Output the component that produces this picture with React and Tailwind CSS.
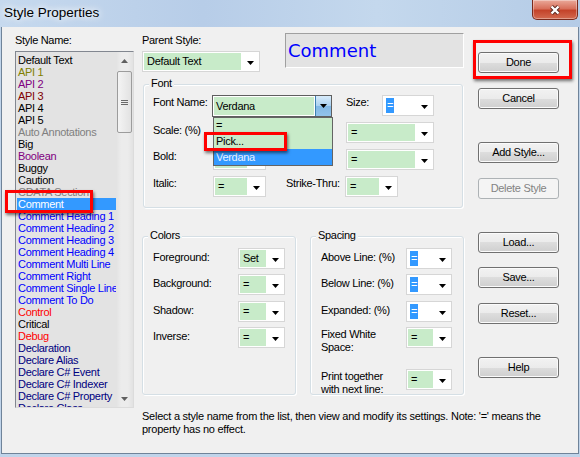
import React from 'react';

const styles = [
  ['Default Text', 'text-black'],
  ['API 1', 'text-[#808000]'],
  ['API 2', 'text-[#800080]'],
  ['API 3', 'text-[#800000]'],
  ['API 4', 'text-black'],
  ['API 5', 'text-black'],
  ['Auto Annotations', 'text-[#808080]'],
  ['Big', 'text-black'],
  ['Boolean', 'text-[#800080]'],
  ['Buggy', 'text-black'],
  ['Caution', 'text-black'],
  ['CDATA Section', 'text-[#808080]'],
  ['Comment', 'text-white bg-[#3399ff]'],
  ['Comment Heading 1', 'text-[#0000ff]'],
  ['Comment Heading 2', 'text-[#0000ff]'],
  ['Comment Heading 3', 'text-[#0000ff]'],
  ['Comment Heading 4', 'text-[#0000ff]'],
  ['Comment Multi Line', 'text-[#0000ff]'],
  ['Comment Right', 'text-[#0000ff]'],
  ['Comment Single Line', 'text-[#0000ff]'],
  ['Comment To Do', 'text-[#0000ff]'],
  ['Control', 'text-[#ff0000]'],
  ['Critical', 'text-black'],
  ['Debug', 'text-[#ff0000]'],
  ['Declaration', 'text-[#000080]'],
  ['Declare Alias', 'text-[#000080]'],
  ['Declare C# Event', 'text-[#000080]'],
  ['Declare C# Indexer', 'text-[#000080]'],
  ['Declare C# Property', 'text-[#000080]'],
  ['Declare Class', 'text-[#000080]'],
];

const Arrow = ({ up, color = '#000' }) => (
  <svg width="7" height="4" viewBox="0 0 7 4" className="block">
    <path d={up ? 'M0 4H7L3.5 0Z' : 'M0 0H7L3.5 4Z'} fill={color} />
  </svg>
);

// combo box: green fill, or white with a selected "="
function Combo({ w, value = '=', sel }) {
  return (
    <div className={`${w} h-[21px] flex shrink-0 border border-[#d6d6d6] bg-white`}>
      <div className="flex-1 p-[1px] flex">
        {sel ? (
          <div className="flex-1 pl-[2px] flex items-center">
            <span className="bg-[#3399ff] text-white text-[11px] leading-[15px] px-[1px]">=</span>
          </div>
        ) : (
          <div className="flex-1 bg-[#c8ebc9] pl-[3px] flex items-center text-[11px] text-black">{value}</div>
        )}
      </div>
      <div className="w-[17px] flex items-center justify-center pt-[2px]">
        <Arrow />
      </div>
    </div>
  );
}

function Btn({ children, disabled }) {
  return (
    <div
      className={`h-[21px] w-[81px] rounded-[3px] border flex items-center justify-center text-[11px] ${
        disabled
          ? 'border-[#adb2b5] bg-[#f4f4f4] text-[#838383]'
          : 'border-[#707070] text-black bg-[linear-gradient(#f2f2f2_0%,#ebebeb_50%,#dddddd_50%,#cfcfcf_100%)] shadow-[inset_0_0_0_1px_#fbfbfb]'
      }`}
    >
      {children}
    </div>
  );
}

function Group({ title, className, children }) {
  return (
    <div className={`relative rounded-[3px] border border-[#d5dfe5] shadow-[inset_1px_1px_0_#fff,1px_1px_0_#fff] ${className}`}>
      <span className="absolute -top-[8px] left-[5px] bg-[#f0f0f0] px-[2px] text-[11px] leading-[13px]">{title}</span>
      {children}
    </div>
  );
}

const RedBox = ({ className }) => (
  <div className={`absolute border-[3px] border-[#ff0000] shadow-[1px_2px_3px_rgba(0,0,0,0.55)] z-20 ${className}`} />
);

function Row({ label, children, two, mt = '' }) {
  return (
    <div className={`flex items-start ${mt}`}>
      <div className={`w-[85px] text-[11px] leading-[13px] ${two ? 'pt-[1px]' : 'pt-[3px]'}`}>{label}</div>
      {children}
    </div>
  );
}

export default function App() {
  return (
    <div className="w-[580px] h-[457px] flex flex-col overflow-hidden bg-[#c0d4ea] font-['Liberation_Sans',Arial,sans-serif] text-black tracking-[-0.3px]">
      {/* title bar */}
      <div className="h-[27px] shrink-0 flex justify-between bg-[linear-gradient(90deg,#c6d9ee,#b7cde8_35%,#c4d8ed_65%,#b4cbe6)]">
        <div className="pl-[4px] pt-[5px] text-[13.5px] leading-[16px] tracking-normal [text-shadow:0_0_6px_#fff,0_0_10px_#fff]">Style Properties</div>
        <div className="mr-[2px] w-[46px] h-[20px] rounded-b-[5px] border border-t-0 border-[#7a2a1c] bg-[linear-gradient(#eaa99a,#d8705b_45%,#c4432a_55%,#d36a50)] shadow-[inset_0_0_0_1px_rgba(255,255,255,0.35)] flex items-center justify-center">
          <svg width="14" height="12" viewBox="0 0 14 12">
            <path d="M3.5 2.5L10.5 9.5M10.5 2.5L3.5 9.5" stroke="#5a2a22" strokeWidth="4.2" />
            <path d="M3.5 2.5L10.5 9.5M10.5 2.5L3.5 9.5" stroke="#fff" strokeWidth="2.4" />
          </svg>
        </div>
      </div>

      {/* client */}
      <div className="flex-1 mx-[1px] mb-[3px] border border-t-0 border-[#6f8399] bg-[#f0f0f0]">
        <div className="flex pl-[13px] pt-[7px]">
          {/* style list */}
          <div className="w-[119px] shrink-0">
            <div className="h-[13px] text-[11px] leading-[13px]">Style Name:</div>
            <div className="relative mt-[4px] h-[357px]">
              <div className="h-full flex border border-[#828790] border-r-[#dcdcdc] border-b-[#dcdcdc] bg-[#e3e3e3] overflow-hidden">
                <div className="flex-1 pt-[2px] pl-[1px] overflow-hidden">
                  {styles.map(([name, cls]) => (
                    <div key={name} className={`h-[12px] leading-[12px] text-[11px] pl-[1px] whitespace-nowrap ${cls}`}>{name}</div>
                  ))}
                </div>
                <div className="w-[17px] flex flex-col bg-[linear-gradient(90deg,#e2e2e2,#ececec_30%,#ececec_70%,#e2e2e2)]">
                  <div className="h-[17px] flex items-center justify-center"><Arrow up color="#606060" /></div>
                  <div className="mx-[1px] mt-[2px] h-[62px] rounded-[2px] border border-[#9c9c9c] bg-[linear-gradient(90deg,#f4f4f4,#e2e2e2)] flex flex-col items-center justify-center gap-[1px]">
                    <div className="w-[7px] h-[1px] bg-[#6a6a6a]" />
                    <div className="w-[7px] h-[1px] bg-[#6a6a6a]" />
                    <div className="w-[7px] h-[1px] bg-[#6a6a6a]" />
                  </div>
                  <div className="flex-1" />
                  <div className="h-[17px] flex items-center justify-center"><Arrow color="#606060" /></div>
                </div>
              </div>
              <RedBox className="left-[-10px] top-[139px] w-[88px] h-[23px]" />
            </div>
          </div>

          {/* right side */}
          <div className="ml-[8px] flex flex-col">
            <div className="flex">
              <div className="w-[322px] shrink-0">
                <div className="flex">
                  <div className="w-[118px]">
                    <div className="h-[13px] text-[11px] leading-[13px]">Parent Style:</div>
                    <div className="mt-[4px]"><Combo w="w-[118px]" value="Default Text" /></div>
                  </div>
                  <div className="ml-[25px] -mt-[1px] w-[179px] h-[35px] border border-[#a0a0a0] border-r-white border-b-white bg-[#e3e3e3] pl-[2px] flex items-center">
                    <span className="font-['DejaVu_Sans',Verdana,sans-serif] text-[18px] tracking-normal text-[#0000ff]">Comment</span>
                  </div>
                </div>

                {/* Font */}
                <Group title="Font" className="mt-[12px] ml-[1px] w-[320px] h-[124px]">
                  <div className="pl-[9px] pt-[10px] flex flex-col gap-[5px]">
                    <div className="flex items-start h-[22px]">
                      <div className="w-[59px] pt-[1px] text-[11px] leading-[13px]">Font Name:</div>
                      <div className="relative w-[120px] h-[22px] flex border border-[#5f5f5f] bg-white">
                        <div className="flex-1 p-[1px]">
                          <div className="h-full bg-[#c8ebc9] flex items-center pl-[2px] text-[11px]">Verdana</div>
                        </div>
                        <div className="w-[16px] border-l border-[#3c7fb1] bg-[linear-gradient(#d8ecfb,#a9d0f0_50%,#82b8e5_50%,#92c3eb)] flex items-center justify-center">
                          <Arrow />
                        </div>
                        <div className="absolute left-0 top-[21px] w-[120px] h-[49px] border border-[#646464] bg-[#c8ebc9] text-[11px] z-10">
                          <div className="h-[15px] leading-[15px] pl-[2px]">=</div>
                          <div className="h-[16px] leading-[16px] pl-[2px]">Pick...</div>
                          <div className="h-[16px] leading-[16px] pl-[2px] bg-[#3399ff] text-[#eaf3ff]">Verdana</div>
                        </div>
                        <RedBox className="left-[-9px] top-[36px] w-[83px] h-[19px]" />
                      </div>
                      <div className="w-[14px]" />
                      <div className="w-[36px] pt-[1px] text-[11px] leading-[13px]">Size:</div>
                      <Combo w="w-[52px]" sel />
                    </div>
                    <div className="flex items-start h-[22px]">
                      <div className="w-[60px] pt-[2px] text-[11px] leading-[13px]">Scale: (%)</div>
                      <Combo w="w-[53px]" />
                      <div className="w-[80px]" />
                      <Combo w="w-[88px]" />
                    </div>
                    <div className="flex items-start h-[22px]">
                      <div className="w-[60px] pt-[1px] text-[11px] leading-[13px]">Bold:</div>
                      <Combo w="w-[53px]" />
                      <div className="w-[80px]" />
                      <Combo w="w-[88px]" />
                    </div>
                    <div className="flex items-start h-[22px]">
                      <div className="w-[60px] pt-[1px] text-[11px] leading-[13px]">Italic:</div>
                      <Combo w="w-[53px]" />
                      <div className="w-[20px]" />
                      <div className="w-[59px] pt-[1px] text-[11px] leading-[13px]">Strike-Thru:</div>
                      <Combo w="w-[53px]" />
                    </div>
                  </div>
                </Group>

                <div className="mt-[28px] flex">
                  <Group title="Colors" className="w-[154px] h-[159px]">
                    <div className="pl-[10px] pt-[11px]">
                      <Row label="Foreground:"><Combo w="w-[47px]" value="Set" /></Row>
                      <Row label="Background:" mt="mt-[5px]"><Combo w="w-[47px]" /></Row>
                      <Row label="Shadow:" mt="mt-[6px]"><Combo w="w-[47px]" /></Row>
                      <Row label="Inverse:" mt="mt-[5px]"><Combo w="w-[47px]" /></Row>
                    </div>
                  </Group>
                  <Group title="Spacing" className="ml-[14px] w-[154px] h-[159px]">
                    <div className="pl-[10px] pt-[11px]">
                      <Row label="Above Line: (%)"><Combo w="w-[46px]" sel /></Row>
                      <Row label="Below Line: (%)" mt="mt-[5px]"><Combo w="w-[46px]" sel /></Row>
                      <Row label="Expanded: (%)" mt="mt-[6px]"><Combo w="w-[46px]" sel /></Row>
                      <Row label={<>Fixed White<br />Space:</>} two mt="mt-[5px]"><Combo w="w-[46px]" /></Row>
                      <Row label={<>Print together<br />with next line:</>} two mt="mt-[15px]"><Combo w="w-[46px]" /></Row>
                    </div>
                  </Group>
                </div>
              </div>

              {/* buttons */}
              <div className="ml-[14px] w-[81px] flex flex-col">
                <div className="relative mt-[18px]">
                  <Btn>Done</Btn>
                  <RedBox className="left-[-5px] top-[-12px] w-[99px] h-[39px]" />
                </div>
                <div className="mt-[15px]"><Btn>Cancel</Btn></div>
                <div className="mt-[33px]"><Btn>Add Style...</Btn></div>
                <div className="mt-[15px]"><Btn disabled>Delete Style</Btn></div>
                <div className="mt-[33px]"><Btn>Load...</Btn></div>
                <div className="mt-[14px]"><Btn>Save...</Btn></div>
                <div className="mt-[15px]"><Btn>Reset...</Btn></div>
                <div className="mt-[33px]"><Btn>Help</Btn></div>
              </div>
            </div>

            <p className="mt-[15px] w-[420px] text-[11px] leading-[13px] tracking-[-0.25px]">
              Select a style name from the list, then view and modify its settings. Note: '=' means the property has no effect.
            </p>
          </div>
        </div>
      </div>
    </div>
  );
}
